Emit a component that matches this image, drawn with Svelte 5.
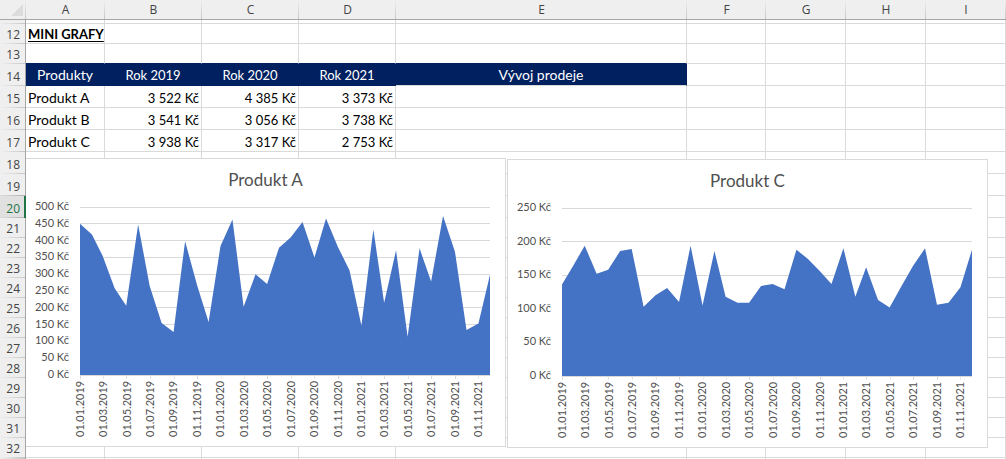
<script>
  const columns = [
    { name: 'A', width: 79 },
    { name: 'B', width: 97 },
    { name: 'C', width: 97 },
    { name: 'D', width: 97 },
    { name: 'E', width: 291 },
    { name: 'F', width: 79 },
    { name: 'G', width: 80 },
    { name: 'H', width: 80 },
    { name: 'I', width: 80 }
  ];

  const cells = {
    12: ['MINI GRAFY'],
    14: ['Produkty', 'Rok 2019', 'Rok 2020', 'Rok 2021', 'Vývoj prodeje'],
    15: ['Produkt A', '3 522 Kč', '4 385 Kč', '3 373 Kč'],
    16: ['Produkt B', '3 541 Kč', '3 056 Kč', '3 738 Kč'],
    17: ['Produkt C', '3 938 Kč', '3 317 Kč', '2 753 Kč']
  };

  const rows = Array.from({ length: 21 }, (_, i) => i + 12);
  const selectedRow = 20;

  function cellClass(row, col) {
    if (row === 12 && col === 0) return 'heading';
    if (row === 13 && col < 5) return 'above-band';
    if (row === 14 && col === 4) return 'band last';
    if (row === 14 && col < 4) return col > 0 ? 'band year' : 'band';
    return row >= 15 && row <= 17 && col > 0 ? 'amount' : '';
  }

  const DAY = 86400000;
  const start = Date.UTC(2019, 0, 1);
  const span = (Date.UTC(2021, 11, 1) - start) / DAY;
  const monthDay = (i) => (Date.UTC(2019, i, 1) - start) / DAY;

  const ticks = Array.from({ length: 18 }, (_, i) => {
    const month = String(((i * 2) % 12) + 1).padStart(2, '0');
    return { day: monthDay(i * 2), label: `01.${month}.${2019 + Math.floor(i / 6)}` };
  });

  const charts = [
    {
      title: 'Produkt A',
      max: 500,
      values: [450, 418, 354, 258, 206, 448, 265, 155, 128, 398, 268, 158, 384, 463, 203, 300, 271, 379,
        409, 455, 350, 466, 381, 312, 147, 433, 215, 371, 114, 377, 278, 473, 367, 134, 153, 298]
    },
    {
      title: 'Produkt C',
      max: 250,
      values: [136, 166, 194, 152, 158, 186, 189, 103, 120, 131, 110, 194, 105, 186, 118, 109, 109, 134,
        137, 129, 188, 174, 156, 137, 190, 118, 162, 113, 102, 134, 164, 190, 106, 109, 132, 188]
    }
  ];

  const steps = (max) => Array.from({ length: max / 50 + 1 }, (_, i) => max - i * 50);

  function area(chart) {
    const top = chart.values.map((v, i) => `${monthDay(i)},${chart.max - v}`);
    return `0,${chart.max} ${top.join(' ')} ${span},${chart.max}`;
  }
</script>

<main class="sheet">
  <table>
    <colgroup>
      <col style="width: 26px" />
      {#each columns as c}
        <col style="width: {c.width}px" />
      {/each}
    </colgroup>
    <thead>
      <tr>
        <th class="corner" aria-label="Vybrat vše">
          <svg width="12" height="12" viewBox="0 0 12 12"><path d="M12 0V12H0Z" fill="#dcdcdc" /></svg>
        </th>
        {#each columns as c}
          <th class="col-head" scope="col">{c.name}</th>
        {/each}
      </tr>
    </thead>
    <tbody>
      <tr class="sliver">
        <th class="row-head"></th>
        {#each columns as _}<td></td>{/each}
      </tr>
      {#each rows as r}
        <tr class:tall={r >= 14 && r <= 20} class:before={r === selectedRow - 1}>
          <th class="row-head" class:selected={r === selectedRow} scope="row">{r}</th>
          {#each columns as _, i}
            <td class={cellClass(r, i)}>{cells[r]?.[i] ?? ''}</td>
          {/each}
        </tr>
      {/each}
      <tr class="edge">
        <th class="row-head"></th>
        {#each columns as _}<td></td>{/each}
      </tr>
    </tbody>
  </table>

  <div class="charts">
    {#each charts as chart}
      <figure class="chart">
        <figcaption>{chart.title}</figcaption>
        <div class="y-axis">
          {#each steps(chart.max) as v}<span>{v} Kč</span>{/each}
        </div>
        <svg class="plot" aria-hidden="true">
          {#each steps(chart.max) as v}
            <line x1="0" x2="100%" y1="{100 - (v / chart.max) * 100}%" y2="{100 - (v / chart.max) * 100}%" />
          {/each}
          <svg width="100%" height="100%" viewBox="0 0 {span} {chart.max}" preserveAspectRatio="none">
            <polygon points={area(chart)} fill="#4472c4" />
          </svg>
          {#each ticks as t}
            <svg x="{(t.day / span) * 100}%" y="100%" width="1" height="4" class="tick">
              <rect width="1" height="4" fill="#d9d9d9" />
            </svg>
          {/each}
        </svg>
        <div class="x-axis">
          {#each ticks as t}<span>{t.label}</span>{/each}
        </div>
      </figure>
    {/each}
  </div>
</main>

<style>
  :global(body) {
    background: #fff;
  }

  .sheet {
    position: relative;
    height: 100vh;
    overflow: hidden;
    font-family: Lato, Calibri, sans-serif;
    font-size: 14px;
    color: #000;
  }

  table {
    width: 100%;
    table-layout: fixed;
    border-collapse: separate;
    border-spacing: 0;
  }

  th,
  td {
    box-sizing: border-box;
    height: 20px;
    padding: 0 2px;
    line-height: 18px;
    white-space: nowrap;
    vertical-align: bottom;
  }

  td {
    border-right: 1px solid #dadada;
    border-bottom: 1px solid #dadada;
  }

  th {
    font-family: 'Open Sans', 'Noto Sans', sans-serif;
    font-size: 12px;
    font-weight: 400;
    color: #444;
    background-color: #efefef;
  }

  .col-head,
  .corner {
    border-bottom: 1px solid #a6a6a6;
    background-image: linear-gradient(#efefef, #c6c6c6);
    background-size: 1px 100%;
    background-position: right;
    background-repeat: no-repeat;
  }

  .corner {
    padding: 0 3px 3px 0;
    line-height: 0;
    text-align: right;
  }

  .row-head {
    position: relative;
    z-index: 2;
    padding: 0 5px 0 0;
    text-align: right;
    border-right: 1px solid #a6a6a6;
    background-image: linear-gradient(to right, #efefef, #c6c6c6);
    background-size: 100% 1px;
    background-position: bottom;
    background-repeat: no-repeat;
  }

  .before .row-head {
    background-image: linear-gradient(to right, #dcdcdc, #b0b0b0);
  }

  .row-head.selected {
    padding-right: 4px;
    color: #217346;
    background-color: #e0e0e0;
    background-image: linear-gradient(to right, #dcdcdc, #b0b0b0);
    border-right: 2px solid #217346;
  }

  .tall th,
  .tall td {
    height: 22px;
  }

  .sliver th,
  .sliver td {
    height: 4px;
    line-height: 0;
  }

  .edge th,
  .edge td {
    height: 1px;
    line-height: 0;
    border-bottom: 0;
  }

  .heading {
    font-size: 13px;
    font-weight: 700;
    text-decoration: underline;
    text-underline-offset: 2px;
  }

  .above-band {
    border-bottom-color: #002060;
  }

  .band {
    color: #fff;
    text-align: center;
    vertical-align: middle;
    background: #002060;
    border-color: #002060;
  }

  .band.last {
    border-bottom-color: #dadada;
  }

  .amount,
  .year {
    font-size: 13px;
  }

  .amount {
    text-align: right;
  }

  /* Charts float over the cell grid */
  .charts {
    position: absolute;
    top: 158px;
    left: 25px;
    right: 0;
    display: flex;
    align-items: flex-start;
    gap: 1px;
    padding-right: 18px;
    z-index: 1;
  }

  .chart {
    box-sizing: border-box;
    flex: 1 1 0;
    display: grid;
    grid-template-columns: 43px 11px 1fr;
    grid-template-rows: 48px 168px 71px;
    margin: 0;
    padding-right: 15px;
    background: #fff;
    border: 1px solid #d9d9d9;
    color: #505050;
    font-size: 11px;
  }

  .chart + .chart {
    margin-top: 1px;
  }

  figcaption {
    grid-column: 1 / -1;
    margin-right: -15px;
    font-size: 17px;
    line-height: 42px;
    text-align: center;
  }

  .y-axis {
    grid-column: 1;
    display: flex;
    flex-direction: column;
    justify-content: space-between;
    margin: -9px 0 -7px;
    line-height: 16px;
    text-align: right;
    white-space: nowrap;
  }

  .plot {
    grid-column: 3;
    width: 100%;
    height: 100%;
    overflow: visible;
  }

  .plot line {
    stroke: #d9d9d9;
    shape-rendering: crispEdges;
  }

  .tick {
    shape-rendering: crispEdges;
  }

  .x-axis {
    grid-column: 3;
    display: grid;
    grid-template-columns: repeat(18, 1fr);
    justify-items: center;
    margin: 6px 0 0 -12px;
  }

  .x-axis span {
    height: 56px;
    line-height: 14px;
    writing-mode: vertical-rl;
    transform: rotate(180deg);
    text-align: right;
  }
</style>
